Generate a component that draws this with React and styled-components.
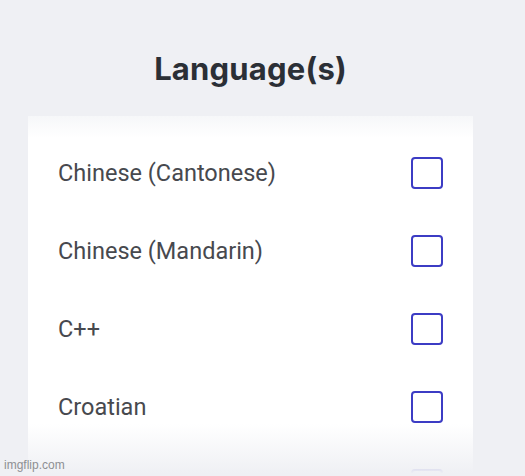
import React from "react";
import styled, { createGlobalStyle } from "styled-components";

const GlobalStyle = createGlobalStyle`
    html, body {
        margin: 0;
        padding: 0;
        background: #eff0f4;
        overflow: hidden;
    }
`;

const Page = styled.div`
    width: 525px;
    height: 476px;
    overflow: hidden;
    position: relative;
    background: #eff0f4;
    font-family: Roboto, "Liberation Sans", sans-serif;
`;

const Title = styled.h2`
    margin: 0;
    width: 501px;
    padding-top: 50px;
    height: 64px;
    box-sizing: border-box;
    text-align: center;
    font-family: Inter, "Liberation Sans", sans-serif;
    font-size: 31px;
    font-weight: 700;
    line-height: 38px;
    color: #2b2f36;
    letter-spacing: 0.2px;
`;

const Card = styled.div`
    position: relative;
    margin: 52px 52px 0 28px;
    padding: 18px 30px 0 30px;
    background: #ffffff;

    &::before {
        content: "";
        position: absolute;
        left: 0;
        right: 0;
        top: 0;
        height: 22px;
        background: linear-gradient(#f6f7f9, rgba(255, 255, 255, 0));
    }
`;

const Row = styled.label`
    display: flex;
    align-items: center;
    justify-content: space-between;
    height: 78px;
    font-size: 23.5px;
    color: #47494e;
`;

const Box = styled.span`
    width: 28px;
    height: 28px;
    border: 2px solid #3c3cc4;
    border-radius: 4px;
    background: #fff;
`;

const Fade = styled.div`
    position: absolute;
    left: 0;
    right: 0;
    bottom: 0;
    height: 52px;
    background: linear-gradient(rgba(239, 240, 244, 0), #eff0f4 95%);
`;

const Watermark = styled.span`
    position: absolute;
    left: 4px;
    bottom: 4px;
    font-family: "Liberation Sans", Arial, sans-serif;
    font-size: 12px;
    line-height: 14px;
    color: #8d8f93;
`;

// the last row sits under the fade, only its box peeks out
const languages = [
    "Chinese (Cantonese)",
    "Chinese (Mandarin)",
    "C++",
    "Croatian",
    "",
];

export default function App() {
    return (
        <Page>
            <GlobalStyle />
            <Title>Language(s)</Title>
            <Card>
                {languages.map((lang, i) => (
                    <Row key={i}>
                        <span>{lang}</span>
                        <Box />
                    </Row>
                ))}
            </Card>
            <Fade />
            <Watermark>imgflip.com</Watermark>
        </Page>
    );
}
